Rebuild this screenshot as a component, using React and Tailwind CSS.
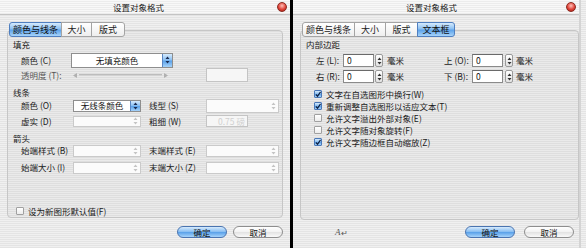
const stripes =
  "bg-[repeating-linear-gradient(0deg,#e4e4e4_0px,#e4e4e4_1px,#f0f0f0_1px,#f0f0f0_2px)]";
const blue =
  "bg-[linear-gradient(#d6ebfd,#8cc0f2_45%,#5da3ea_55%,#a6d3fa)]";

function UpDown({ color = "#555" }) {
  return (
    <svg width="5" height="8" viewBox="0 0 5 8">
      <path d="M2.5 0.5L4.5 3H0.5Z M2.5 7.5L4.5 5H0.5Z" fill={color} />
    </svg>
  );
}

function CloseButton() {
  return (
    <div className="w-[10px] h-[10px] rounded-full border border-[#8a2a20] bg-[radial-gradient(circle_at_50%_35%,#ffc0b8,#e0443a_55%,#a01810)]" />
  );
}

function Tabs({ items, active }) {
  return (
    <div className="relative z-10 flex">
      {items.map((t, i) => (
        <div
          key={t.label}
          style={{ width: t.w }}
          className={`h-[15px] flex items-center justify-center text-[9px] leading-none border -ml-px ${
            i === 0 ? "rounded-l-[3px] ml-0" : ""
          } ${i === items.length - 1 ? "rounded-r-[3px]" : ""} ${
            i === active
              ? `${blue} border-[#4f7fc0] text-[#111]`
              : "bg-[linear-gradient(#ffffff,#eeeeee)] border-[#a4a4a4] text-[#222]"
          }`}
        >
          {t.label}
        </div>
      ))}
    </div>
  );
}

function Dropdown({ w, h = 13, text, enabled }) {
  return (
    <div
      style={{ width: w, height: h }}
      className={`flex border ${
        enabled ? "border-[#8e8e8e] bg-white" : "border-[#cacaca] bg-[#fbfbfb]"
      }`}
    >
      <div className="flex-1 flex items-center justify-center text-[8.5px] leading-none text-[#111]">
        {text}
      </div>
      {enabled ? (
        <div className={`w-[10px] flex items-center justify-center ${blue} border-l border-[#5a86c2]`}>
          <UpDown color="#1a2a50" />
        </div>
      ) : (
        <div className="w-[10px] flex items-center justify-center">
          <UpDown color="#c4c4c4" />
        </div>
      )}
    </div>
  );
}

function TextBox({ w, h = 13, value, disabled }) {
  return (
    <div
      style={{ width: w, height: h }}
      className={`flex items-center px-[3px] text-[8.5px] leading-none whitespace-nowrap overflow-hidden border ${
        disabled
          ? "border-[#c4c4c4] text-[#d0d0d0] bg-[#f6f6f6]"
          : "border-[#8a8a8a] border-t-[#6a6a6a] bg-white text-[#111]"
      }`}
    >
      {value}
    </div>
  );
}

function Spinner() {
  return (
    <div className="w-[8px] h-[13px] rounded-[2px] border border-[#9a9a9a] bg-[linear-gradient(#ffffff,#e2e2e2)] flex items-center justify-center">
      <UpDown color="#333" />
    </div>
  );
}

function Check({ checked }) {
  return checked ? (
    <div className={`w-[8px] h-[8px] rounded-[1px] border border-[#4a78b8] ${blue} flex items-center justify-center`}>
      <svg width="7" height="7" viewBox="0 0 7 7">
        <path d="M1 3.5L3 5.5L6.5 0.5" stroke="#102040" strokeWidth="1.4" fill="none" />
      </svg>
    </div>
  ) : (
    <div className="w-[8px] h-[8px] rounded-[1px] border border-[#a0a0a0] bg-[linear-gradient(#ffffff,#ececec)]" />
  );
}

function Button({ children, primary }) {
  return (
    <div
      className={`w-[50px] h-[12px] rounded-full flex items-center justify-center text-[8.5px] leading-none text-[#111] border ${
        primary
          ? `${blue} border-[#4a74b0]`
          : "bg-[linear-gradient(#ffffff,#f2f2f2_50%,#e4e4e4_55%,#fafafa)] border-[#8e8e8e]"
      }`}
    >
      {children}
    </div>
  );
}

function TitleBar() {
  return (
    <div className="h-[15px] flex items-center border-b border-[#c4c4c4] bg-[repeating-linear-gradient(0deg,#ececec_0px,#ececec_1px,#f8f8f8_1px,#f8f8f8_2px)]">
      <div className="ml-[113px] text-[8.5px] leading-none text-[#222]">设置对象格式</div>
      <div className="ml-auto mr-[3px]">
        <CloseButton />
      </div>
    </div>
  );
}

function Label({ w, children, dim }) {
  return (
    <div
      style={{ width: w }}
      className={`shrink-0 text-[8.5px] leading-none whitespace-nowrap ${dim ? "text-[#555]" : "text-[#1a1a1a]"}`}
    >
      {children}
    </div>
  );
}

function Header({ children }) {
  return <div className="h-[12px] flex items-center pl-[5px] text-[8.5px] leading-none text-[#1a1a1a]">{children}</div>;
}

function Slider() {
  return (
    <div className="w-[95px] h-[6px] flex items-center gap-[2px]">
      <svg width="4" height="5" viewBox="0 0 4 5">
        <path d="M0 2.5L4 0V5Z" fill="#b0b0b0" />
      </svg>
      <div className="flex-1 h-[2px] bg-[#d2d2d2] border-t border-[#bdbdbd]" />
      <svg width="4" height="5" viewBox="0 0 4 5">
        <path d="M4 2.5L0 0V5Z" fill="#b0b0b0" />
      </svg>
    </div>
  );
}

function LeftDialog() {
  return (
    <div className={`w-[290px] h-[248px] flex flex-col ${stripes}`}>
      <TitleBar />
      <div className="mt-[7px] pl-[9px]">
        <Tabs
          active={0}
          items={[
            { label: "颜色与线条", w: 53 },
            { label: "大小", w: 31 },
            { label: "版式", w: 34 },
          ]}
        />
      </div>
      <div className="-mt-[7px] ml-[7px] w-[276px] h-[188px] rounded-[4px] border border-[#c6c6c6] bg-black/[0.025] pt-[7px] flex flex-col">
        <Header>填充</Header>
        <div className="mt-[3px] h-[16px] flex items-center pl-[13px]">
          <Label w={50}>颜色 (C)</Label>
          <Dropdown w={102} h={15} text="无填充颜色" enabled />
        </div>
        <div className="h-[15px] flex items-center pl-[13px]">
          <Label w={52} dim>透明度 (T):</Label>
          <Slider />
          <div className="ml-[38px]">
            <TextBox w={42} h={14} disabled />
          </div>
        </div>
        <div className="mt-[4px]">
          <Header>线条</Header>
        </div>
        <div className="h-[14px] flex items-center pl-[13px]">
          <Label w={52}>颜色 (O)</Label>
          <Dropdown w={68} h={12} text="无线条颜色" enabled />
          <div className="w-[8px]" />
          <Label w={57}>线型 (S)</Label>
          <Dropdown w={73} h={14} />
        </div>
        <div className="mt-[2px] h-[14px] flex items-center pl-[13px]">
          <Label w={52}>虚实 (D)</Label>
          <Dropdown w={68} h={11} />
          <div className="w-[8px]" />
          <Label w={57}>粗细 (W)</Label>
          <TextBox w={42} h={12} value={<span className="pl-[8px]">0.75 磅</span>} disabled />
        </div>
        <div className="mt-[4px]">
          <Header>箭头</Header>
        </div>
        <div className="h-[13px] flex items-center pl-[13px]">
          <Label w={52}>始端样式 (B)</Label>
          <Dropdown w={68} h={12} />
          <div className="w-[8px]" />
          <Label w={57}>末端样式 (E)</Label>
          <Dropdown w={73} h={12} />
        </div>
        <div className="mt-[4px] h-[14px] flex items-center pl-[13px]">
          <Label w={52}>始端大小 (I)</Label>
          <Dropdown w={68} h={12} />
          <div className="w-[8px]" />
          <Label w={57}>末端大小 (Z)</Label>
          <Dropdown w={73} h={12} />
        </div>
        <div className="mt-[31px] h-[12px] flex items-center pl-[8px] gap-[4px]">
          <Check />
          <span className="text-[8.5px] leading-none text-[#1a1a1a]">设为新图形默认值(F)</span>
        </div>
      </div>
      <div className="mt-[8px] flex justify-end gap-[6px] pr-[7px]">
        <Button primary>确定</Button>
        <Button>取消</Button>
      </div>
    </div>
  );
}

function MarginRow({ a, b, mt }) {
  return (
    <div className={`${mt} h-[15px] flex items-center pl-[15px]`}>
      <div className="w-[128px] flex items-center">
        <Label w={27}>{a}</Label>
        <TextBox w={31} value="0" />
        <div className="ml-[1px]">
          <Spinner />
        </div>
        <span className="ml-[4px] text-[8.5px] leading-none text-[#1a1a1a]">毫米</span>
      </div>
      <Label w={28}>{b}</Label>
      <TextBox w={31} value="0" />
      <div className="ml-[2px]">
        <Spinner />
      </div>
      <span className="ml-[3px] text-[8.5px] leading-none text-[#1a1a1a]">毫米</span>
    </div>
  );
}

const options = [
  ["文字在自选图形中换行(W)", true],
  ["重新调整自选图形以适应文本(T)", true],
  ["允许文字溢出外部对象(E)", false],
  ["允许文字随对象旋转(F)", false],
  ["允许文字随边框自动缩放(Z)", true],
];

function RightDialog() {
  return (
    <div className={`w-[293px] h-[248px] flex ${stripes}`}>
      <div className="w-[288px] h-full flex flex-col border-r-2 border-[#d4d4d4]">
        <TitleBar />
        <div className="mt-[7px] pl-[9px]">
          <Tabs
            active={3}
            items={[
              { label: "颜色与线条", w: 53 },
              { label: "大小", w: 32 },
              { label: "版式", w: 33 },
              { label: "文本框", w: 38 },
            ]}
          />
        </div>
        <div className="-mt-[7px] ml-[7px] w-[279px] h-[190px] rounded-[4px] border border-[#c6c6c6] bg-black/[0.025] pt-[7px] flex flex-col">
          <Header>内部边距</Header>
          <MarginRow a="左 (L):" b="上 (O):" mt="mt-[3px]" />
          <MarginRow a="右 (R):" b="下 (B):" mt="mt-[1px]" />
          <div className="mt-[4px] flex flex-col">
            {options.map(([t, c]) => (
              <div key={t} className="h-[12px] flex items-center pl-[13px] gap-[4px]">
                <Check checked={c} />
                <span className="text-[8.5px] leading-none text-[#1a1a1a]">{t}</span>
              </div>
            ))}
          </div>
        </div>
        <div className="mt-[6px] flex items-center pr-[5px]">
          <div className="ml-[42px] flex items-end text-[#555]">
            <span className="text-[9px] italic leading-none font-['Liberation_Serif',serif]">A</span>
            <span className="text-[8px] leading-none">↵</span>
          </div>
          <div className="ml-auto flex gap-[9px]">
            <Button primary>确定</Button>
            <Button>取消</Button>
          </div>
        </div>
      </div>
    </div>
  );
}

export default function App() {
  return (
    <div className="w-[586px] h-[248px] flex overflow-hidden font-['Noto_Sans_CJK_SC','Noto_Sans',sans-serif]">
      <LeftDialog />
      <div className="w-[3px] h-full bg-black" />
      <RightDialog />
    </div>
  );
}
